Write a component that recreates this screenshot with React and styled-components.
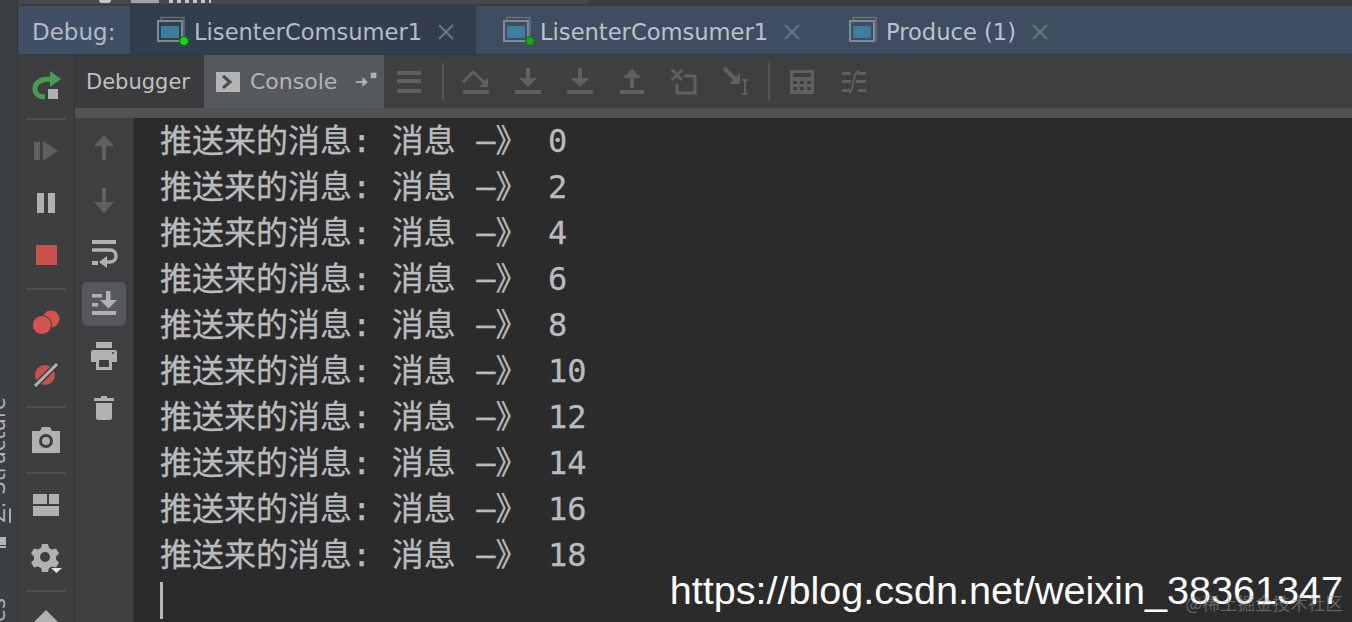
import React from 'react'
import styled, { createGlobalStyle } from 'styled-components'

const GlobalStyle = createGlobalStyle`
html, body {
    margin: 0;
    padding: 0;
    background: #3c3f41;
}
`

const Page = styled.div`
position: relative;
width: 1352px;
height: 622px;
overflow: hidden;
display: flex;
background: #3c3f41;
font-family: "DejaVu Sans", sans-serif;
`

const SideStrip = styled.div`
width: 18px;
flex: none;
display: flex;
flex-direction: column;
align-items: flex-start;
padding-top: 397px;
box-sizing: border-box;
border-right: 1px solid #323436;
background: #3c3f41;
overflow: hidden;
`

const SideLabel = styled.span`
writing-mode: vertical-rl;
transform: rotate(180deg);
font-size: 21px;
line-height: 18px;
margin-left: -11px;
color: #aeb0b2;
white-space: pre;
`

const SideSquares = styled.span`
display: block;
width: 6px;
height: 17px;
margin-top: 14px;
background: linear-gradient(#b4b6b8 0 8px, transparent 8px 9px, #b4b6b8 9px);
`

const SideTail = styled(SideLabel)`
margin-top: 50px;
`

const Main = styled.div`
flex: 1;
min-width: 0;
display: flex;
flex-direction: column;
`

const TopStrip = styled.div`
height: 6px;
flex: none;
display: flex;
align-items: flex-start;
background: linear-gradient(#3a3b3d 0 6px) 0 4px / 100% 2px no-repeat,
    linear-gradient(90deg, #46484a 570px, #3a3b3d 570px);
overflow: hidden;
`

const TreeDot = styled.span`
width: 12px;
height: 3px;
margin-left: 81px;
border-radius: 0 0 6px 6px;
background: #c4c6c8;
`

const TreeBox = styled.span`
width: 28px;
height: 3px;
margin-left: 20px;
background: #9fa2a5;
`

const TreeText = styled.span`
width: 42px;
height: 3px;
margin-left: 10px;
background: repeating-linear-gradient(90deg, #c4c6c8 0 4px, transparent 4px 8px);
`

const TabBar = styled.div`
height: 48px;
flex: none;
display: flex;
align-items: stretch;
background: #3e4d5f;
border-bottom: 1px solid #34373a;
`

const DebugLabel = styled.div`
width: 112px;
box-sizing: border-box;
padding: 3px 0 0 14px;
display: flex;
align-items: center;
font-size: 23px;
color: #b4bac0;
background: #3f5065;
`

const Tab = styled.div`
width: 346px;
box-sizing: border-box;
padding-left: 27px;
display: flex;
align-items: center;
background: ${p => (p.$active ? '#313e4d' : 'transparent')};
color: ${p => (p.$active ? '#b7bcc2' : '#bcc2c8')};
font-size: 22.6px;
`

const TabIcon = styled.span`
position: relative;
width: 28px;
height: 28px;
flex: none;
margin-right: 9px;
`

const RunDot = styled.span`
position: absolute;
right: -4px;
bottom: -2px;
width: 8px;
height: 8px;
border-radius: 50%;
background: ${p => (p.$active ? '#12d812' : '#14a814')};
border: 0.5px solid #1a5c1a;
`

const TabName = styled.span`
white-space: pre;
padding-top: 3px;
`

const TabClose = styled.span`
display: flex;
margin: 3px 0 0 15px;
color: #6c7884;
`

const Body = styled.div`
flex: 1;
min-height: 0;
display: flex;
`

const DebugRail = styled.div`
width: 57px;
flex: none;
box-sizing: border-box;
padding-top: 6px;
display: flex;
flex-direction: column;
align-items: center;
border-right: 1px solid #333537;
background: #3d3e40;
`

const RailButton = styled.div`
width: 44px;
height: 52px;
flex: none;
display: flex;
align-items: center;
justify-content: center;
color: #afb1b3;
`

const RailSep = styled.div`
width: 40px;
height: 2px;
flex: none;
margin: ${p => p.$top}px 0 ${p => p.$bottom}px;
background: #4c4e50;
`

const Content = styled.div`
flex: 1;
min-width: 0;
display: flex;
flex-direction: column;
`

const Toolbar = styled.div`
height: 53px;
flex: none;
display: flex;
align-items: stretch;
background: #3e3f41;
`

const DebuggerTab = styled.div`
width: 129px;
box-sizing: border-box;
padding-left: 11px;
display: flex;
align-items: center;
font-size: 21px;
color: #bfc1c3;
background: #3a3b3d;
`

const ConsoleTab = styled.div`
width: 180px;
box-sizing: border-box;
padding-left: 12px;
display: flex;
align-items: center;
font-size: 22px;
color: #b2b4b6;
background: #56595b;
`

const ConsoleName = styled.span`
margin: 0 15px 0 10px;
`

const ToolIcons = styled.div`
display: flex;
align-items: center;
gap: 20px;
margin-left: ${p => p.$left}px;
color: #5e6062;
`

const ToolSep = styled.div`
width: 2px;
height: 38px;
align-self: center;
margin-left: 16px;
background: #525456;
`

const Band = styled.div`
height: 10px;
flex: none;
background: #505254;
`

const Lower = styled.div`
flex: 1;
min-height: 0;
display: flex;
`

const ConsoleRail = styled.div`
width: 59px;
flex: none;
box-sizing: border-box;
padding-top: 8px;
display: flex;
flex-direction: column;
align-items: center;
gap: 8px;
border-right: 1px solid #333537;
background: #3e3f41;
`

const ConsoleButton = styled.div`
width: 44px;
height: 44px;
display: flex;
align-items: center;
justify-content: center;
border-radius: 5px;
color: ${p => (p.$dim ? '#5e6062' : '#afb1b3')};
background: ${p => (p.$on ? '#56595c' : 'transparent')};
`

const Output = styled.div`
flex: 1;
min-width: 0;
padding-left: 26px;
background: #2b2b2b;
font-family: "DejaVu Sans Mono", "Noto Sans CJK SC", monospace;
font-size: 32px;
word-spacing: 1.2px;
color: #b9bbbd;
-webkit-text-stroke: 0.3px #b9bbbd;
`

const Line = styled.div`
height: 46px;
line-height: 46px;
white-space: pre;
`

const Caret = styled.div`
width: 3px;
height: 37px;
margin-top: 4px;
background: #b4b6b8;
`

const Url = styled.div`
position: absolute;
right: 9px;
bottom: 8px;
font-family: "Liberation Sans", Arial, sans-serif;
font-size: 39.6px;
line-height: 47px;
color: #ffffff;
white-space: nowrap;
`

const Mark = styled.div`
position: absolute;
right: 9px;
bottom: 7px;
font-family: "Noto Sans CJK SC", sans-serif;
font-size: 17.6px;
line-height: 24px;
color: rgba(150, 150, 150, 0.55);
white-space: nowrap;
`

const Icon = ({ children, size = 32 }) => (
    <svg width={size} height={size} viewBox="0 0 32 32" fill="currentColor">
        {children}
    </svg>
)

const WindowIcon = () => (
    <svg width="28" height="28" viewBox="0 0 28 28" fill="none">
        <path d="M4 4V1.5h23V24h-2.5" stroke="#717b85" strokeWidth="1.5" opacity="0.8" />
        <rect x="1" y="5" width="24" height="20" stroke="#808a94" strokeWidth="2" />
        <rect x="4" y="10" width="18" height="12" fill="#3b7d9c" />
    </svg>
)

const CloseIcon = () => (
    <svg width="18" height="18" viewBox="0 0 18 18" stroke="currentColor" strokeWidth="2">
        <path d="M2 2l14 14M16 2L2 16" />
    </svg>
)

const icons = {
    rerun: (
        <>
            <path d="M21 8C10 8 5 12 5 18c0 5 4 8 10 8" fill="none" stroke="#499c54" strokeWidth="5" />
            <path d="M20 0l11 8-11 8z" fill="#499c54" />
            <rect x="18" y="18" width="10" height="10" fill="#afb1b3" />
        </>
    ),
    resume: (
        <g fill="#5e6062">
            <rect x="4" y="7" width="6" height="18" />
            <path d="M13 6l15 10-15 10z" />
        </g>
    ),
    pause: (
        <>
            <rect x="7" y="6" width="7" height="20" />
            <rect x="18" y="6" width="7" height="20" />
        </>
    ),
    stop: <rect x="6" y="6" width="21" height="20" fill="#c9514c" />,
    breakpoints: (
        <g fill="#d5534e">
            <circle cx="21" cy="13" r="8.5" />
            <circle cx="12" cy="19" r="9.5" stroke="#3d3e40" strokeWidth="1" />
        </g>
    ),
    mute: (
        <>
            <circle cx="15" cy="17" r="10" fill="#c9514c" />
            <path d="M5 28L27 6" stroke="#3d3e40" strokeWidth="6" />
            <path d="M5 28L27 6" stroke="#afb1b3" strokeWidth="3" />
        </>
    ),
    camera: (
        <path
            fillRule="evenodd"
            d="M2 7h8l2-4h8l2 4h8v22H2zM16 10a7 7 0 100 14 7 7 0 000-14zm0 3a4 4 0 110 8 4 4 0 010-8z"
        />
    ),
    layout: (
        <>
            <rect x="3" y="5" width="14" height="10" />
            <rect x="19" y="5" width="10" height="10" />
            <rect x="3" y="17" width="26" height="10" />
        </>
    ),
    gear: (
        <>
            <path
                fillRule="evenodd"
                d="M12 3h6l1 4 3 1.500 4-1 3 5-3 3v3l3 3-3 5-4-1-3 1.500-1 4h-6l-1-4-3-1.500-4 1-3-5 3-3v-3l-3-3 3-5 4 1L11 7zM15 11a5 5 0 100 10 5 5 0 000-10z"
            />
            <path d="M21 27h11l-5.500 5z" fill="#dfe1e3" />
        </>
    ),
    pin: (
        <g fill="#afb1b3">
            <path d="M4 15h11v2H4z" />
            <path d="M11 11l6 5-6 5z" />
            <rect x="20" y="6" width="6" height="6" />
        </g>
    ),
    lines: (
        <>
            <rect x="3" y="5" width="24" height="4" />
            <rect x="3" y="13" width="24" height="4" />
            <rect x="3" y="23" width="24" height="4" />
        </>
    ),
    stepOver: (
        <>
            <path d="M3 16L13 6l12 11" fill="none" stroke="currentColor" strokeWidth="3" />
            <path d="M28 12v9h-9z" />
            <rect x="3" y="24" width="26" height="4" />
        </>
    ),
    stepInto: (
        <>
            <rect x="14" y="2" width="4" height="12" />
            <path d="M7 12h18l-9 9z" />
            <rect x="3" y="24" width="26" height="4" />
        </>
    ),
    stepOut: (
        <>
            <rect x="14" y="10" width="4" height="12" />
            <path d="M7 12h18l-9-9z" />
            <rect x="4" y="24" width="24" height="4" />
        </>
    ),
    dropFrame: (
        <>
            <path d="M4 4l10 10M14 4L4 14" stroke="currentColor" strokeWidth="3" />
            <path d="M16 10h11v17H9v-9" fill="none" stroke="currentColor" strokeWidth="3" />
        </>
    ),
    runCursor: (
        <>
            <path d="M4 2l14 14" stroke="currentColor" strokeWidth="4" />
            <path d="M20 7v11H9z" />
            <path d="M22 14h6M25 14v14M22 28h6" fill="none" stroke="currentColor" strokeWidth="2" />
        </>
    ),
    table: (
        <path
            fillRule="evenodd"
            d="M4 4h24v24H4zM7 7v4h18V7zM7 15v3h4v-3zm7 0v3h4v-3zm7 0v3h4v-3zM7 21v3h4v-3zm7 0v3h4v-3zm7 0v3h4v-3z"
        />
    ),
    trace: (
        <>
            <path d="M4 6h9v3H4zM4 14h9v3H4zM4 23h8v3H4zM20 6h8v3h-8zM18 14h10v3H18zM20 23h8v3h-8z" />
            <path d="M11 27c5 0 3-21 10-22" fill="none" stroke="currentColor" strokeWidth="2" />
        </>
    ),
    up: <path d="M16 3l10 11h-8v14h-4V14H6z" />,
    down: <path d="M16 29L6 18h8V4h4v14h8z" />,
    wrap: (
        <>
            <rect x="4" y="4" width="24" height="4" />
            <path d="M4 14h18c8 0 8 12 0 12h-5" fill="none" stroke="currentColor" strokeWidth="3.500" />
            <path d="M19 20v12l-8-6z" />
            <rect x="4" y="25" width="6" height="4" />
        </>
    ),
    scrollEnd: (
        <>
            <rect x="4" y="6" width="10" height="3.500" />
            <rect x="4" y="15" width="6" height="3.500" />
            <rect x="4" y="23" width="24" height="4" />
            <rect x="18" y="3" width="4.500" height="10" />
            <path d="M12 12h17l-8.500 8.500z" />
        </>
    ),
    print: (
        <path
            fillRule="evenodd"
            d="M8 2h16v6H8zM5 10h22a2 2 0 012 2v10h-5v8H8v-8H3V12a2 2 0 012-2zM11 20v7h10v-7zM25 12a1 1 0 100 2 1 1 0 000-2z"
        />
    ),
    trash: (
        <>
            <path d="M6 6h7V4h6v2h7v3H6z" />
            <path d="M8 11h16v15a2 2 0 01-2 2H10a2 2 0 01-2-2z" />
        </>
    ),
    pinUp: <path d="M16 6L4 18h24z" />,
}

const MESSAGES = [0, 2, 4, 6, 8, 10, 12, 14, 16, 18]
const TABS = [
    { name: 'LisenterComsumer1', running: true, active: true },
    { name: 'LisenterComsumer1', running: true },
    { name: 'Produce (1)' },
]

export default function App() {
    return (
        <Page>
            <GlobalStyle />
            <SideStrip>
                <SideLabel><u>Z</u>: Structure</SideLabel>
                <SideSquares />
                <SideTail>es</SideTail>
            </SideStrip>
            <Main>
                <TopStrip>
                    <TreeDot />
                    <TreeBox />
                    <TreeText />
                </TopStrip>
                <TabBar>
                    <DebugLabel>Debug:</DebugLabel>
                    {TABS.map((t, i) => (
                        <Tab key={i} $active={t.active}>
                            <TabIcon>
                                <WindowIcon />
                                {t.running && <RunDot $active={t.active} />}
                            </TabIcon>
                            <TabName>{t.name}</TabName>
                            <TabClose><CloseIcon /></TabClose>
                        </Tab>
                    ))}
                </TabBar>
                <Body>
                    <DebugRail>
                        <RailButton><Icon>{icons.rerun}</Icon></RailButton>
                        <RailSep $top={5} $bottom={5} />
                        <RailButton><Icon>{icons.resume}</Icon></RailButton>
                        <RailButton><Icon>{icons.pause}</Icon></RailButton>
                        <RailButton><Icon>{icons.stop}</Icon></RailButton>
                        <RailSep $top={7} $bottom={6} />
                        <RailButton><Icon>{icons.breakpoints}</Icon></RailButton>
                        <RailButton><Icon>{icons.mute}</Icon></RailButton>
                        <RailSep $top={6} $bottom={6} />
                        <RailButton><Icon>{icons.camera}</Icon></RailButton>
                        <RailSep $top={6} $bottom={5} />
                        <RailButton><Icon>{icons.layout}</Icon></RailButton>
                        <RailButton><Icon>{icons.gear}</Icon></RailButton>
                        <RailSep $top={7} $bottom={2} />
                        <RailButton><Icon>{icons.pinUp}</Icon></RailButton>
                    </DebugRail>
                    <Content>
                        <Toolbar>
                            <DebuggerTab>Debugger</DebuggerTab>
                            <ConsoleTab>
                                <svg width="24" height="20" viewBox="0 0 24 20">
                                    <rect width="24" height="20" fill="#b2b4b6" />
                                    <path d="M7 4l7 6-7 6" fill="none" stroke="#4a4c4e" strokeWidth="3" />
                                </svg>
                                <ConsoleName>Console</ConsoleName>
                                <Icon size={30}>{icons.pin}</Icon>
                            </ConsoleTab>
                            <ToolIcons $left={10}>
                                <Icon>{icons.lines}</Icon>
                            </ToolIcons>
                            <ToolSep />
                            <ToolIcons $left={16}>
                                <Icon>{icons.stepOver}</Icon>
                                <Icon>{icons.stepInto}</Icon>
                                <Icon>{icons.stepInto}</Icon>
                                <Icon>{icons.stepOut}</Icon>
                                <Icon>{icons.dropFrame}</Icon>
                                <Icon>{icons.runCursor}</Icon>
                            </ToolIcons>
                            <ToolSep />
                            <ToolIcons $left={16}>
                                <Icon>{icons.table}</Icon>
                                <Icon>{icons.trace}</Icon>
                            </ToolIcons>
                        </Toolbar>
                        <Band />
                        <Lower>
                            <ConsoleRail>
                                <ConsoleButton $dim><Icon>{icons.up}</Icon></ConsoleButton>
                                <ConsoleButton $dim><Icon>{icons.down}</Icon></ConsoleButton>
                                <ConsoleButton><Icon>{icons.wrap}</Icon></ConsoleButton>
                                <ConsoleButton $on><Icon>{icons.scrollEnd}</Icon></ConsoleButton>
                                <ConsoleButton><Icon>{icons.print}</Icon></ConsoleButton>
                                <ConsoleButton><Icon>{icons.trash}</Icon></ConsoleButton>
                            </ConsoleRail>
                            <Output>
                                {MESSAGES.map(n => (
                                    <Line key={n}>{`推送来的消息: 消息 –》 ${n}`}</Line>
                                ))}
                                <Caret />
                            </Output>
                        </Lower>
                    </Content>
                </Body>
            </Main>
            <Url>https://blog.csdn.net/weixin_38361347</Url>
            <Mark>@稀土掘金技术社区</Mark>
        </Page>
    )
}
